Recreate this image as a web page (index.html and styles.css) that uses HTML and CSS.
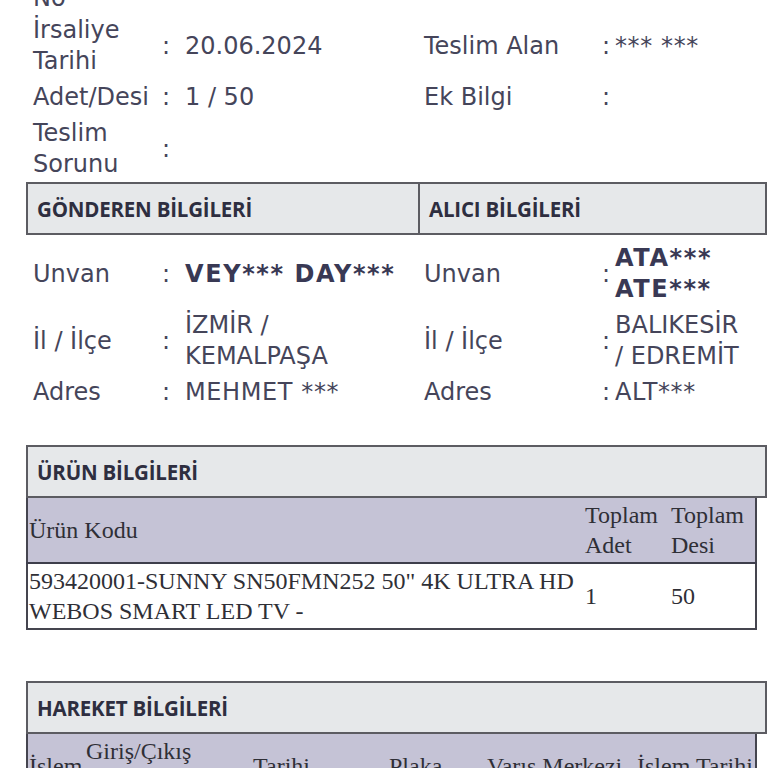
FILE: index.html
```html
<!DOCTYPE html>
<html lang="tr">
<head>
<meta charset="utf-8">
<title>Kargo Takip</title>
<link rel="stylesheet" href="styles.css">
</head>
<body>
<div class="page">
  <div class="info info-top">
    <div class="lbl first">Gönderi No</div><div class="col first">:</div><div class="val first">&nbsp;</div>
    <div class="lbl2 first">Teslim Tarihi</div><div class="col2 first">:</div><div class="val2 first">&nbsp;</div>

    <div class="lbl">İrsaliye Tarihi</div><div class="col">:</div><div class="val">20.06.2024</div>
    <div class="lbl2">Teslim Alan</div><div class="col2">:</div><div class="val2 mask">*** ***</div>

    <div class="lbl">Adet/Desi</div><div class="col">:</div><div class="val">1 / 50</div>
    <div class="lbl2">Ek Bilgi</div><div class="col2">:</div><div class="val2"></div>

    <div class="lbl">Teslim Sorunu</div><div class="col">:</div><div class="val"></div>
    <div class="lbl2"></div><div class="col2"></div><div class="val2"></div>
  </div>

  <div class="sec-head split">
    <div class="sec-title">GÖNDEREN BİLGİLERİ</div>
    <div class="sec-title right">ALICI BİLGİLERİ</div>
  </div>

  <div class="info info-party">
    <div class="lbl">Unvan</div><div class="col">:</div><div class="val strong">VEY*** DAY***</div>
    <div class="lbl2">Unvan</div><div class="col2">:</div><div class="val2 strong">ATA*** ATE***</div>

    <div class="lbl">İl / İlçe</div><div class="col">:</div><div class="val">İZMİR / KEMALPAŞA</div>
    <div class="lbl2">İl / İlçe</div><div class="col2">:</div><div class="val2">BALIKESİR / EDREMİT</div>

    <div class="lbl">Adres</div><div class="col">:</div><div class="val mask">MEHMET ***</div>
    <div class="lbl2">Adres</div><div class="col2">:</div><div class="val2 mask">ALT***</div>
  </div>

  <div class="sec-head product-head">
    <div class="sec-title">ÜRÜN BİLGİLERİ</div>
  </div>
  <table class="grid products">
    <colgroup><col class="pc1"><col class="pc2"><col class="pc3"></colgroup>
    <thead>
      <tr><th>Ürün Kodu</th><th>Toplam Adet</th><th>Toplam Desi</th></tr>
    </thead>
    <tbody>
      <tr><td>593420001-SUNNY SN50FMN252 50" 4K ULTRA HD WEBOS SMART LED TV -</td><td>1</td><td>50</td></tr>
    </tbody>
  </table>

  <div class="sec-head move-head">
    <div class="sec-title">HAREKET BİLGİLERİ</div>
  </div>
  <table class="grid moves">
    <colgroup><col class="mc1"><col class="mc2"><col class="mc3"><col class="mc4"><col class="mc5"><col class="mc6"></colgroup>
    <thead>
      <tr><th>İşlem</th><th>Giriş/Çıkış Birimi</th><th>Tarihi</th><th>Plaka</th><th>Varış Merkezi</th><th>İşlem Tarihi</th></tr>
    </thead>
    <tbody>
      <tr><td>Çıkış</td><td>İZMİR</td><td>20.06.2024</td><td>35 ***</td><td>BALIKESİR</td><td>20.06.2024</td></tr>
    </tbody>
  </table>
</div>
</body>
</html>
```

FILE: styles.css
```css
html, body {
  margin: 0;
  padding: 0;
  background: #ffffff;
}

body {
  font-family: "DejaVu Sans", Verdana, sans-serif;
  color: #45455a;
  overflow: hidden;
}

.page {
  padding-left: 26px;
  width: 741px;
}

.info {
  display: grid;
  grid-template-columns: 135px 24px 233px 182px 15px 138px;
  align-items: center;
  font-size: 24px;
  line-height: 31px;
  row-gap: 5px;
}

.info-top {
  margin-top: -48px;
}

.info-top .first {
  margin-bottom: -4px;
}

.info-party {
  margin-top: 8px;
  row-gap: 5px;
}

.lbl {
  padding-left: 7px;
}

.col {
  padding-left: 1px;
}

.val {
  padding-right: 12px;
}

.lbl2 {
  padding-left: 6px;
}

.col2 {
  padding-left: 2px;
}

.mask {
  letter-spacing: 0.6px;
}

.strong {
  font-weight: bold;
  color: #393954;
  letter-spacing: 1.6px;
}

.sec-head {
  display: flex;
  height: 49px;
  background: #e6e8ea;
  border: 2px solid #5c5c62;
  align-items: center;
}

.split {
  margin-top: 2px;
}

.sec-title {
  font-family: "Open Sans", "DejaVu Sans", sans-serif;
  font-weight: 700;
  font-size: 20.5px;
  color: #2e2e40;
  padding-left: 9px;
  letter-spacing: -0.2px;
}

.split .sec-title {
  width: 381px;
  height: 100%;
  display: flex;
  align-items: center;
}

.split .sec-title.right {
  border-left: 2px solid #5c5c62;
  flex: 1;
  width: auto;
}

.product-head {
  margin-top: 37px;
}

.move-head {
  margin-top: 51px;
}

.grid {
  border-collapse: collapse;
  table-layout: fixed;
  width: 729px;
  font-family: "Liberation Serif", "Times New Roman", serif;
  font-size: 24px;
  line-height: 30px;
  color: #2f2f36;
  border: 2px solid #45454f;
  border-top: 0;
}

.grid th {
  background: #c5c3d6;
  font-weight: normal;
  text-align: left;
  vertical-align: middle;
  height: 60px;
  padding: 2px 0 2px 1px;
  border-bottom: 2px solid #3e3e4c;
}

.grid td {
  vertical-align: middle;
  padding: 2px 0 2px 1px;
  height: 59px;
}

.pc1 { width: 557px; }
.pc2 { width: 86px; }
.pc3 { width: 86px; }

.mc1 { width: 58px; }
.mc2 { width: 167px; }
.mc3 { width: 136px; }
.mc4 { width: 98px; }
.mc5 { width: 150px; }
.mc6 { width: 120px; }
```
